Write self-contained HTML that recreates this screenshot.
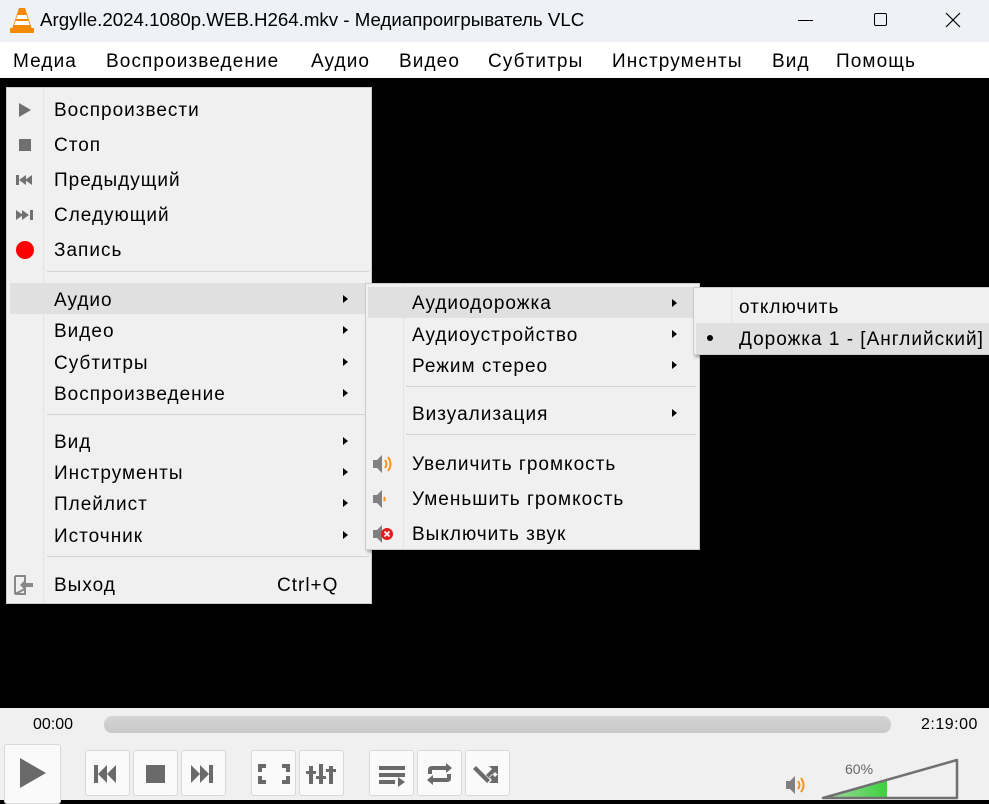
<!DOCTYPE html>
<html><head><meta charset="utf-8"><style>
*{margin:0;padding:0;box-sizing:border-box}
body{width:989px;height:800px;overflow:hidden;position:relative;background:#000;font-family:"Liberation Sans","DejaVu Sans",sans-serif;color:#000}
.a{position:absolute;white-space:nowrap}
#title{left:0;top:0;width:989px;height:42px;background:#eef2f7}
#mb{left:0;top:42px;width:989px;height:36px;background:#fff;font-size:19px;letter-spacing:1.1px}
#ctl{left:0;top:708px;width:989px;height:92px;background:#f0f0f0}
.menu{position:absolute;background:#f0f0f0;border:1px solid #ccc;box-shadow:2px 2px 3px rgba(0,0,0,.35)}
.t{position:absolute;font-size:19px;line-height:22px;white-space:nowrap;letter-spacing:1px}
.sep{position:absolute;height:1px;background:#d4d4d4}
.arr{position:absolute;width:0;height:0;border-top:4px solid transparent;border-bottom:4px solid transparent;border-left:5px solid #000}
.hl{position:absolute;background:#e0e0e0}
.btn{position:absolute;background:#fafafa;border:1px solid #d8d8d8;border-radius:3px}
</style></head><body>
<div class="a" id="title">
<svg class="a" style="left:10px;top:7px" width="24" height="26" viewBox="0 0 24 26"><path d="M9 1h6l7 21H2z" fill="#f48a00"/><path d="M7.5 8h9l1.3 4H6.2zM5.5 14h13l1.2 4H4.3z" fill="#fff"/><rect x="0" y="21" width="24" height="5" rx="1" fill="#f48a00"/></svg>
<div class="a" style="left:40px;top:9px;font-size:18.7px">Argylle.2024.1080p.WEB.H264.mkv - Медиапроигрыватель VLC</div>
<div class="a" style="left:798px;top:20px;width:15px;height:1px;background:#000"></div>
<div class="a" style="left:874px;top:13px;width:13px;height:13px;border:1px solid #000;border-radius:2px"></div>
<svg class="a" style="left:945px;top:12px" width="16" height="16"><path d="M1 1L15 15M15 1L1 15" stroke="#000" stroke-width="1.2"/></svg>
</div>
<div class="a" id="mb">
<span class="a" style="left:13px;top:9px">Медиа</span>
<span class="a" style="left:106px;top:9px">Воспроизведение</span>
<span class="a" style="left:311px;top:9px">Аудио</span>
<span class="a" style="left:399px;top:9px">Видео</span>
<span class="a" style="left:488px;top:9px">Субтитры</span>
<span class="a" style="left:612px;top:9px">Инструменты</span>
<span class="a" style="left:772px;top:9px">Вид</span>
<span class="a" style="left:836px;top:9px">Помощь</span>
</div>

<div class="menu" style="left:6px;top:87px;width:366px;height:517px">
<div class="a" style="left:36px;top:0;width:1px;height:515px;background:#e4e4e4"></div>
<div class="hl" style="left:3px;top:195px;width:357px;height:31px"></div>
<svg class="a" style="left:10px;top:14px" width="16" height="16"><path d="M2 1L14 8L2 15z" fill="#707070"/></svg>
<div class="a" style="left:12px;top:51px;width:12px;height:12px;background:#707070"></div>
<svg class="a" style="left:8px;top:86px" width="20" height="12"><path d="M1 1h3v10H1zM4 6l7-5v10zM10 6l7-5v10z" fill="#707070"/></svg>
<svg class="a" style="left:8px;top:121px" width="20" height="12"><path d="M1 1l7 5-7 5zM7 1l7 5-7 5zM15 1h3v10h-3z" fill="#707070"/></svg>
<div class="a" style="left:9px;top:153px;width:18px;height:18px;border-radius:50%;background:#f00"></div>
<svg class="a" style="left:6px;top:487px" width="22" height="20"><path d="M2 1h10v5M12 14v5H2zM2 1v18" stroke="#888" stroke-width="2" fill="none"/><path d="M7 10l6-6v4h7v4h-7v4z" fill="#888"/></svg>
<div class="t" style="left:47px;top:12px">Воспроизвести</div>
<div class="t" style="left:47px;top:47px">Стоп</div>
<div class="t" style="left:47px;top:82px">Предыдущий</div>
<div class="t" style="left:47px;top:117px">Следующий</div>
<div class="t" style="left:47px;top:152px">Запись</div>
<div class="sep" style="left:40px;top:183px;width:322px"></div>
<div class="t" style="left:47px;top:202px">Аудио</div>
<div class="t" style="left:47px;top:233px">Видео</div>
<div class="t" style="left:47px;top:265px">Субтитры</div>
<div class="t" style="left:47px;top:296px">Воспроизведение</div>
<div class="sep" style="left:40px;top:326px;width:322px"></div>
<div class="t" style="left:47px;top:344px">Вид</div>
<div class="t" style="left:47px;top:375px">Инструменты</div>
<div class="t" style="left:47px;top:406px">Плейлист</div>
<div class="t" style="left:47px;top:438px">Источник</div>
<div class="sep" style="left:40px;top:468px;width:322px"></div>
<div class="t" style="left:47px;top:487px">Выход</div>
<div class="t" style="left:270px;top:487px">Ctrl+Q</div>
<div class="arr" style="left:336px;top:207px"></div>
<div class="arr" style="left:336px;top:238px"></div>
<div class="arr" style="left:336px;top:270px"></div>
<div class="arr" style="left:336px;top:301px"></div>
<div class="arr" style="left:336px;top:349px"></div>
<div class="arr" style="left:336px;top:380px"></div>
<div class="arr" style="left:336px;top:411px"></div>
<div class="arr" style="left:336px;top:443px"></div>
</div>

<div class="menu" style="left:365px;top:283px;width:335px;height:267px">
<div class="a" style="left:37px;top:0;width:1px;height:265px;background:#e4e4e4"></div>
<div class="hl" style="left:2px;top:3px;width:326px;height:31px"></div>
<div class="t" style="left:46px;top:9px">Аудиодорожка</div>
<div class="t" style="left:46px;top:41px">Аудиоустройство</div>
<div class="t" style="left:46px;top:72px">Режим стерео</div>
<div class="sep" style="left:40px;top:102px;width:290px"></div>
<div class="t" style="left:46px;top:120px">Визуализация</div>
<div class="sep" style="left:40px;top:150px;width:290px"></div>
<div class="t" style="left:46px;top:170px">Увеличить громкость</div>
<div class="t" style="left:46px;top:205px">Уменьшить громкость</div>
<div class="t" style="left:46px;top:240px">Выключить звук</div>
<div class="arr" style="left:306px;top:15px"></div>
<div class="arr" style="left:306px;top:46px"></div>
<div class="arr" style="left:306px;top:77px"></div>
<div class="arr" style="left:306px;top:125px"></div>
<svg class="a" style="left:5px;top:170px" width="24" height="20"><path d="M2 6h4l5-5v18l-5-5H2z" fill="#808080"/><path d="M14 6q3 4 0 8M17 3q5 7 0 14" stroke="#f7941d" stroke-width="2" fill="none"/></svg>
<svg class="a" style="left:5px;top:205px" width="24" height="20"><path d="M2 6h4l5-5v18l-5-5H2z" fill="#808080"/><path d="M13 8q1.5 2 0 4" stroke="#f7941d" stroke-width="2" fill="none"/></svg>
<svg class="a" style="left:5px;top:240px" width="24" height="20"><path d="M2 6h4l5-5v18l-5-5H2z" fill="#808080"/><circle cx="16" cy="10" r="6" fill="#e21b1b"/><path d="M13.5 7.5l5 5M18.5 7.5l-5 5" stroke="#fff" stroke-width="1.8"/></svg>
</div>

<div class="menu" style="left:693px;top:287px;width:300px;height:68px;border-right:none;overflow:hidden">
<div class="a" style="left:37px;top:0;width:1px;height:66px;background:#e4e4e4"></div>
<div class="hl" style="left:2px;top:35px;width:296px;height:31px"></div>
<div class="t" style="left:45px;top:9px">отключить</div>
<div class="t" style="left:45px;top:41px">Дорожка 1 - [Английский]</div>
<div class="a" style="left:13px;top:47px;width:6px;height:6px;border-radius:50%;background:#000"></div>
</div>

<div class="a" id="ctl">
<div class="a" style="left:33px;top:8px;font-size:16px">00:00</div>
<div class="a" style="left:104px;top:8px;width:787px;height:17px;border-radius:8px;background:linear-gradient(#d4d4d4,#c8c8c8)"></div>
<div class="a" style="left:921px;top:8px;font-size:16px;letter-spacing:0.5px">2:19:00</div>
<div class="btn" style="left:4px;top:36px;width:57px;height:60px"></div>
<svg class="a" style="left:19px;top:49px" width="28" height="32"><path d="M1 1L27 16L1 31z" fill="#6a6a6a"/></svg>
<div class="btn" style="left:85px;top:42px;width:45px;height:46px"></div>
<div class="btn" style="left:133px;top:42px;width:45px;height:46px"></div>
<div class="btn" style="left:181px;top:42px;width:45px;height:46px"></div>
<div class="btn" style="left:251px;top:42px;width:45px;height:46px"></div>
<div class="btn" style="left:299px;top:42px;width:45px;height:46px"></div>
<div class="btn" style="left:369px;top:42px;width:45px;height:46px"></div>
<div class="btn" style="left:417px;top:42px;width:45px;height:46px"></div>
<div class="btn" style="left:465px;top:42px;width:45px;height:46px"></div>
<svg class="a" style="left:0;top:0" width="520" height="92" fill="#6a6a6a">
<path d="M94 57h4v18h-4zM98 66l9-9v18zM107 66l9-9v18z"/>
<rect x="146" y="57" width="19" height="18"/>
<path d="M191 57l9 9-9 9zM200 57l9 9-9 9zM209 57h4v18h-4z"/>
<path d="M258 56h8v4h-4v4h-4zM282 56h8v8h-4v-4h-4zM258 68h4v4h4v4h-8zM286 68h4v8h-8v-4h4z"/>
<path d="M309 58h4v18h-4zM306 63h10v3h-10zM319 56h4v20h-4zM316 68h10v3h-10zM329 58h4v18h-4zM326 61h10v3h-10z"/>
<path d="M379 58h26v4h-26zM379 65h26v4h-26zM379 72h16v4h-16zM398 69l7 5-7 5z"/>
<path d="M428 62q0-4 4-4h14v-3l6 5-6 5v-3h-14v4h-4zM451 70q0 4-4 4h-14v3l-6-5 6-5v3h14v-4h4z"/>
<path d="M476 58l14 14-3 3-14-14zM498 58v9l-3-3-6 6-3-3 6-6-3-3zM498 75v-9l-3 3-3-3-3 3 3 3-3 3z"/>
</svg>
<svg class="a" style="left:784px;top:66px" width="24" height="22"><path d="M2 7h4l5-5v18l-5-5H2z" fill="#808080"/><path d="M14 7q3 4 0 8M17 4q5 7 0 14" stroke="#f7941d" stroke-width="2" fill="none"/></svg>
<div class="a" style="left:845px;top:53px;font-size:14px;color:#666">60%</div>
<svg class="a" style="left:820px;top:50px" width="140" height="42"><defs><linearGradient id="g" x1="0" x2="1"><stop offset="0" stop-color="#a8dba8"/><stop offset="1" stop-color="#3ecf3e"/></linearGradient></defs><path d="M3 40L67 23V40z" fill="url(#g)"/><path d="M3 40L137 2V40z" fill="none" stroke="#707070" stroke-width="2.5" stroke-linejoin="round"/></svg>
</div>
</body></html>
